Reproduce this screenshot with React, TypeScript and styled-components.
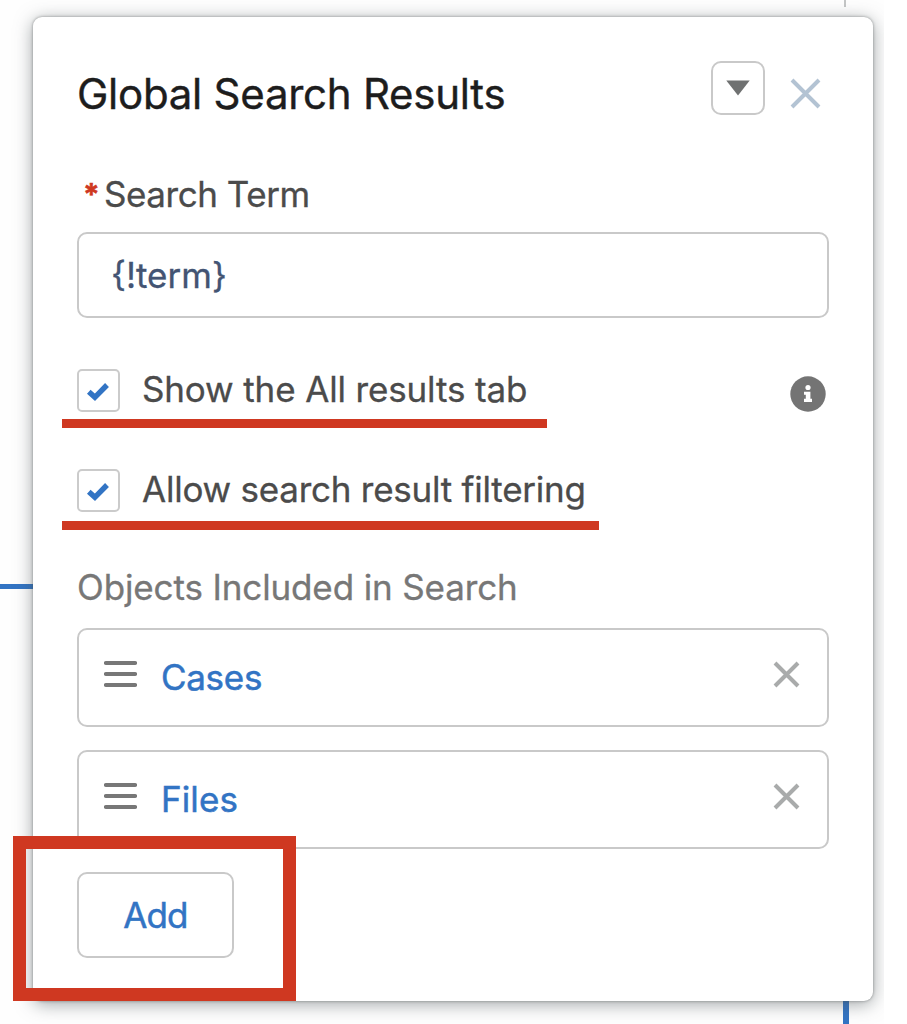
import React from 'react';
import styled, { createGlobalStyle } from 'styled-components';

const GlobalStyle = createGlobalStyle`
  *, *::before, *::after { box-sizing: border-box; }
  body { margin: 0; background: #fff; font-family: Inter, "Liberation Sans", sans-serif; }
`;

const red = '#cf3821';
const blue = '#3274c4';

const Canvas = styled.main`
  position: relative;
  width: 884px;
  height: 1024px;
  overflow: hidden;
  padding: 17px 11px 23px 33px;
  background: #fefefe;
`;

const Connector = styled.i<{ x: number; y: number; w: number; h: number; color: string }>`
  position: absolute;
  left: ${p => p.x}px;
  top: ${p => p.y}px;
  width: ${p => p.w}px;
  height: ${p => p.h}px;
  background: ${p => p.color};
`;

const Card = styled.section`
  position: relative;
  height: 984px;
  padding: 44px 44px 0;
  border-radius: 9px;
  background: #fff;
  box-shadow: 0 0 3px rgba(70, 75, 75, 0.55), 0 3px 18px rgba(70, 80, 85, 0.52);
`;

const Header = styled.header`
  display: flex;
  align-items: flex-start;
  height: 54px;
`;

const Title = styled.h1`
  flex: 1;
  margin: 8px 0 0;
  font-size: 42px;
  line-height: 50px;
  font-weight: 400;
  letter-spacing: -0.26px;
  color: #1d1d1d;
  -webkit-text-stroke: 0.4px #1d1d1d;
`;

const MenuButton = styled.button`
  display: flex;
  justify-content: center;
  width: 54px;
  height: 54px;
  padding: 17px 0 0;
  border: 2px solid #c9c9c9;
  border-radius: 10px;
  background: #fff;
`;

const CloseButton = styled.button`
  display: flex;
  margin: 17px 8px 0 25px;
  padding: 0;
  border: 0;
  background: none;
`;

const Label = styled.label`
  display: flex;
  height: 42px;
  margin-top: 58px;
  padding-left: 6px;
  font-size: 35px;
  line-height: 42px;
  letter-spacing: -0.45px;
  color: #4b4b4b;
  -webkit-text-stroke: 0.3px #4b4b4b;
`;

const Required = styled.span`
  width: 21px;
  font-size: 30px;
  font-weight: 700;
  letter-spacing: 0;
  color: ${red};
  -webkit-text-stroke: 0.5px ${red};
`;

const TextField = styled.div`
  display: flex;
  align-items: center;
  height: 86px;
  margin-top: 17px;
  padding-left: 32px;
  border: 2px solid #c9c9c9;
  border-radius: 10px;
  font-size: 35px;
  color: #435473;
  -webkit-text-stroke: 0.3px #435473;
`;

const CheckRow = styled.div<{ gap: number; line: number; lineTop: number }>`
  position: relative;
  display: flex;
  height: 43px;
  margin-top: ${p => p.gap}px;

  &::after {
    content: '';
    position: absolute;
    left: -15px;
    top: ${p => p.lineTop}px;
    width: ${p => p.line}px;
    height: 9px;
    background: ${red};
  }
`;

const CheckBox = styled.span`
  display: flex;
  width: 43px;
  height: 43px;
  border: 2px solid #cbcbcb;
  border-radius: 5px;
`;

const CheckText = styled.span<{ spacing: number }>`
  flex: 1;
  margin: -1px 0 0 22px;
  font-size: 35px;
  line-height: 43px;
  letter-spacing: ${p => p.spacing}px;
  white-space: nowrap;
  color: #4b4b4b;
  -webkit-text-stroke: 0.3px #4b4b4b;
`;

const InfoIcon = styled.svg`
  margin: 7px 3px 0 0;
`;

const GroupLabel = styled.h2`
  margin: 54px 0 20px;
  font-size: 35px;
  line-height: 42px;
  font-weight: 400;
  letter-spacing: -0.13px;
  color: #777;
  -webkit-text-stroke: 0.3px #777;
`;

const ObjectList = styled.div`
  display: flex;
  flex-direction: column;
  gap: 23px;
`;

const ObjectRow = styled.div`
  display: flex;
  align-items: center;
  height: 99px;
  padding: 0 27px 0 25px;
  border: 2px solid #c9c9c9;
  border-radius: 10px;
  background: #fff;
`;

const ObjectName = styled.span<{ spacing: number }>`
  flex: 1;
  margin: 0 0 2px 24px;
  font-size: 35px;
  letter-spacing: ${p => p.spacing}px;
  color: ${blue};
  -webkit-text-stroke: 0.5px ${blue};
`;

const DragHandle = styled.svg`
  margin-bottom: 7px;
`;

const RemoveButton = styled.button`
  display: flex;
  margin-bottom: 7px;
  padding: 0;
  border: 0;
  background: none;
`;

const AddButton = styled.button`
  display: block;
  width: 157px;
  height: 86px;
  margin-top: 23px;
  padding: 0;
  border: 2px solid #c9c9c9;
  border-radius: 10px;
  background: #fff;
  font: 400 35px Inter, "Liberation Sans", sans-serif;
  letter-spacing: -0.9px;
  color: ${blue};
  -webkit-text-stroke: 0.5px ${blue};
`;

const Highlight = styled.div`
  position: absolute;
  left: 13px;
  top: 836px;
  width: 283px;
  height: 165px;
  border: 13px solid ${red};
`;

const Cross = ({ size, color, width }: { size: number; color: string; width: number }) => (
  <svg width={size} height={size} viewBox={`0 0 ${size} ${size}`}>
    <path d={`M2 2 L${size - 2} ${size - 2} M${size - 2} 2 L2 ${size - 2}`} stroke={color} strokeWidth={width} />
  </svg>
);

const Check = () => (
  <svg width="39" height="39" viewBox="0 0 39 39">
    <path d="M9.8 20.8 L15.9 26.3 L28 14" fill="none" stroke={blue} strokeWidth="5.4" />
  </svg>
);

const objects = [
  { name: 'Cases', spacing: -0.3 },
  { name: 'Files', spacing: 0.1 },
];

export default function App() {
  return (
    <>
      <GlobalStyle />
      <Canvas>
        <Connector x={844} y={0} w={2} h={7} color="#c4c6c6" />
        <Connector x={0} y={584} w={34} h={5} color={blue} />
        <Connector x={843} y={1000} w={6} h={24} color={blue} />
        <Card>
          <Header>
            <Title>Global Search Results</Title>
            <MenuButton aria-label="Menu">
              <svg width="24" height="16" viewBox="0 0 24 16">
                <path d="M0.3 0.5 H23.7 L12 15.5 Z" fill="#6f7171" />
              </svg>
            </MenuButton>
            <CloseButton aria-label="Close">
              <Cross size={31} color="#b3c3d3" width={4} />
            </CloseButton>
          </Header>
          <Label>
            <Required>*</Required>Search Term
          </Label>
          <TextField>{'{!term}'}</TextField>
          <CheckRow gap={51} line={485} lineTop={50}>
            <CheckBox><Check /></CheckBox>
            <CheckText spacing={-0.14}>Show the All results tab</CheckText>
            <InfoIcon width="36" height="36" viewBox="0 0 36 36">
              <circle cx="18" cy="18" r="17.7" fill="#747474" />
              <circle cx="18" cy="11.5" r="2.6" fill="#fff" />
              <path d="M14 15.8 H20.4 V22.8 H22 V26 H14 V22.8 H15.8 V18.8 H14 Z" fill="#fff" />
            </InfoIcon>
          </CheckRow>
          <CheckRow gap={57} line={537} lineTop={52}>
            <CheckBox><Check /></CheckBox>
            <CheckText spacing={-0.24}>Allow search result filtering</CheckText>
          </CheckRow>
          <GroupLabel>Objects Included in Search</GroupLabel>
          <ObjectList>
            {objects.map(o => (
              <ObjectRow key={o.name}>
                <DragHandle width="33" height="28" viewBox="0 0 33 28">
                  <path d="M2 3 H31 M2 14 H31 M2 25 H31" stroke="#777" strokeWidth="4.2" strokeLinecap="round" />
                </DragHandle>
                <ObjectName spacing={o.spacing}>{o.name}</ObjectName>
                <RemoveButton aria-label={`Remove ${o.name}`}>
                  <Cross size={27} color="#a9abab" width={4} />
                </RemoveButton>
              </ObjectRow>
            ))}
          </ObjectList>
          <AddButton>Add</AddButton>
        </Card>
        <Highlight />
      </Canvas>
    </>
  );
}
